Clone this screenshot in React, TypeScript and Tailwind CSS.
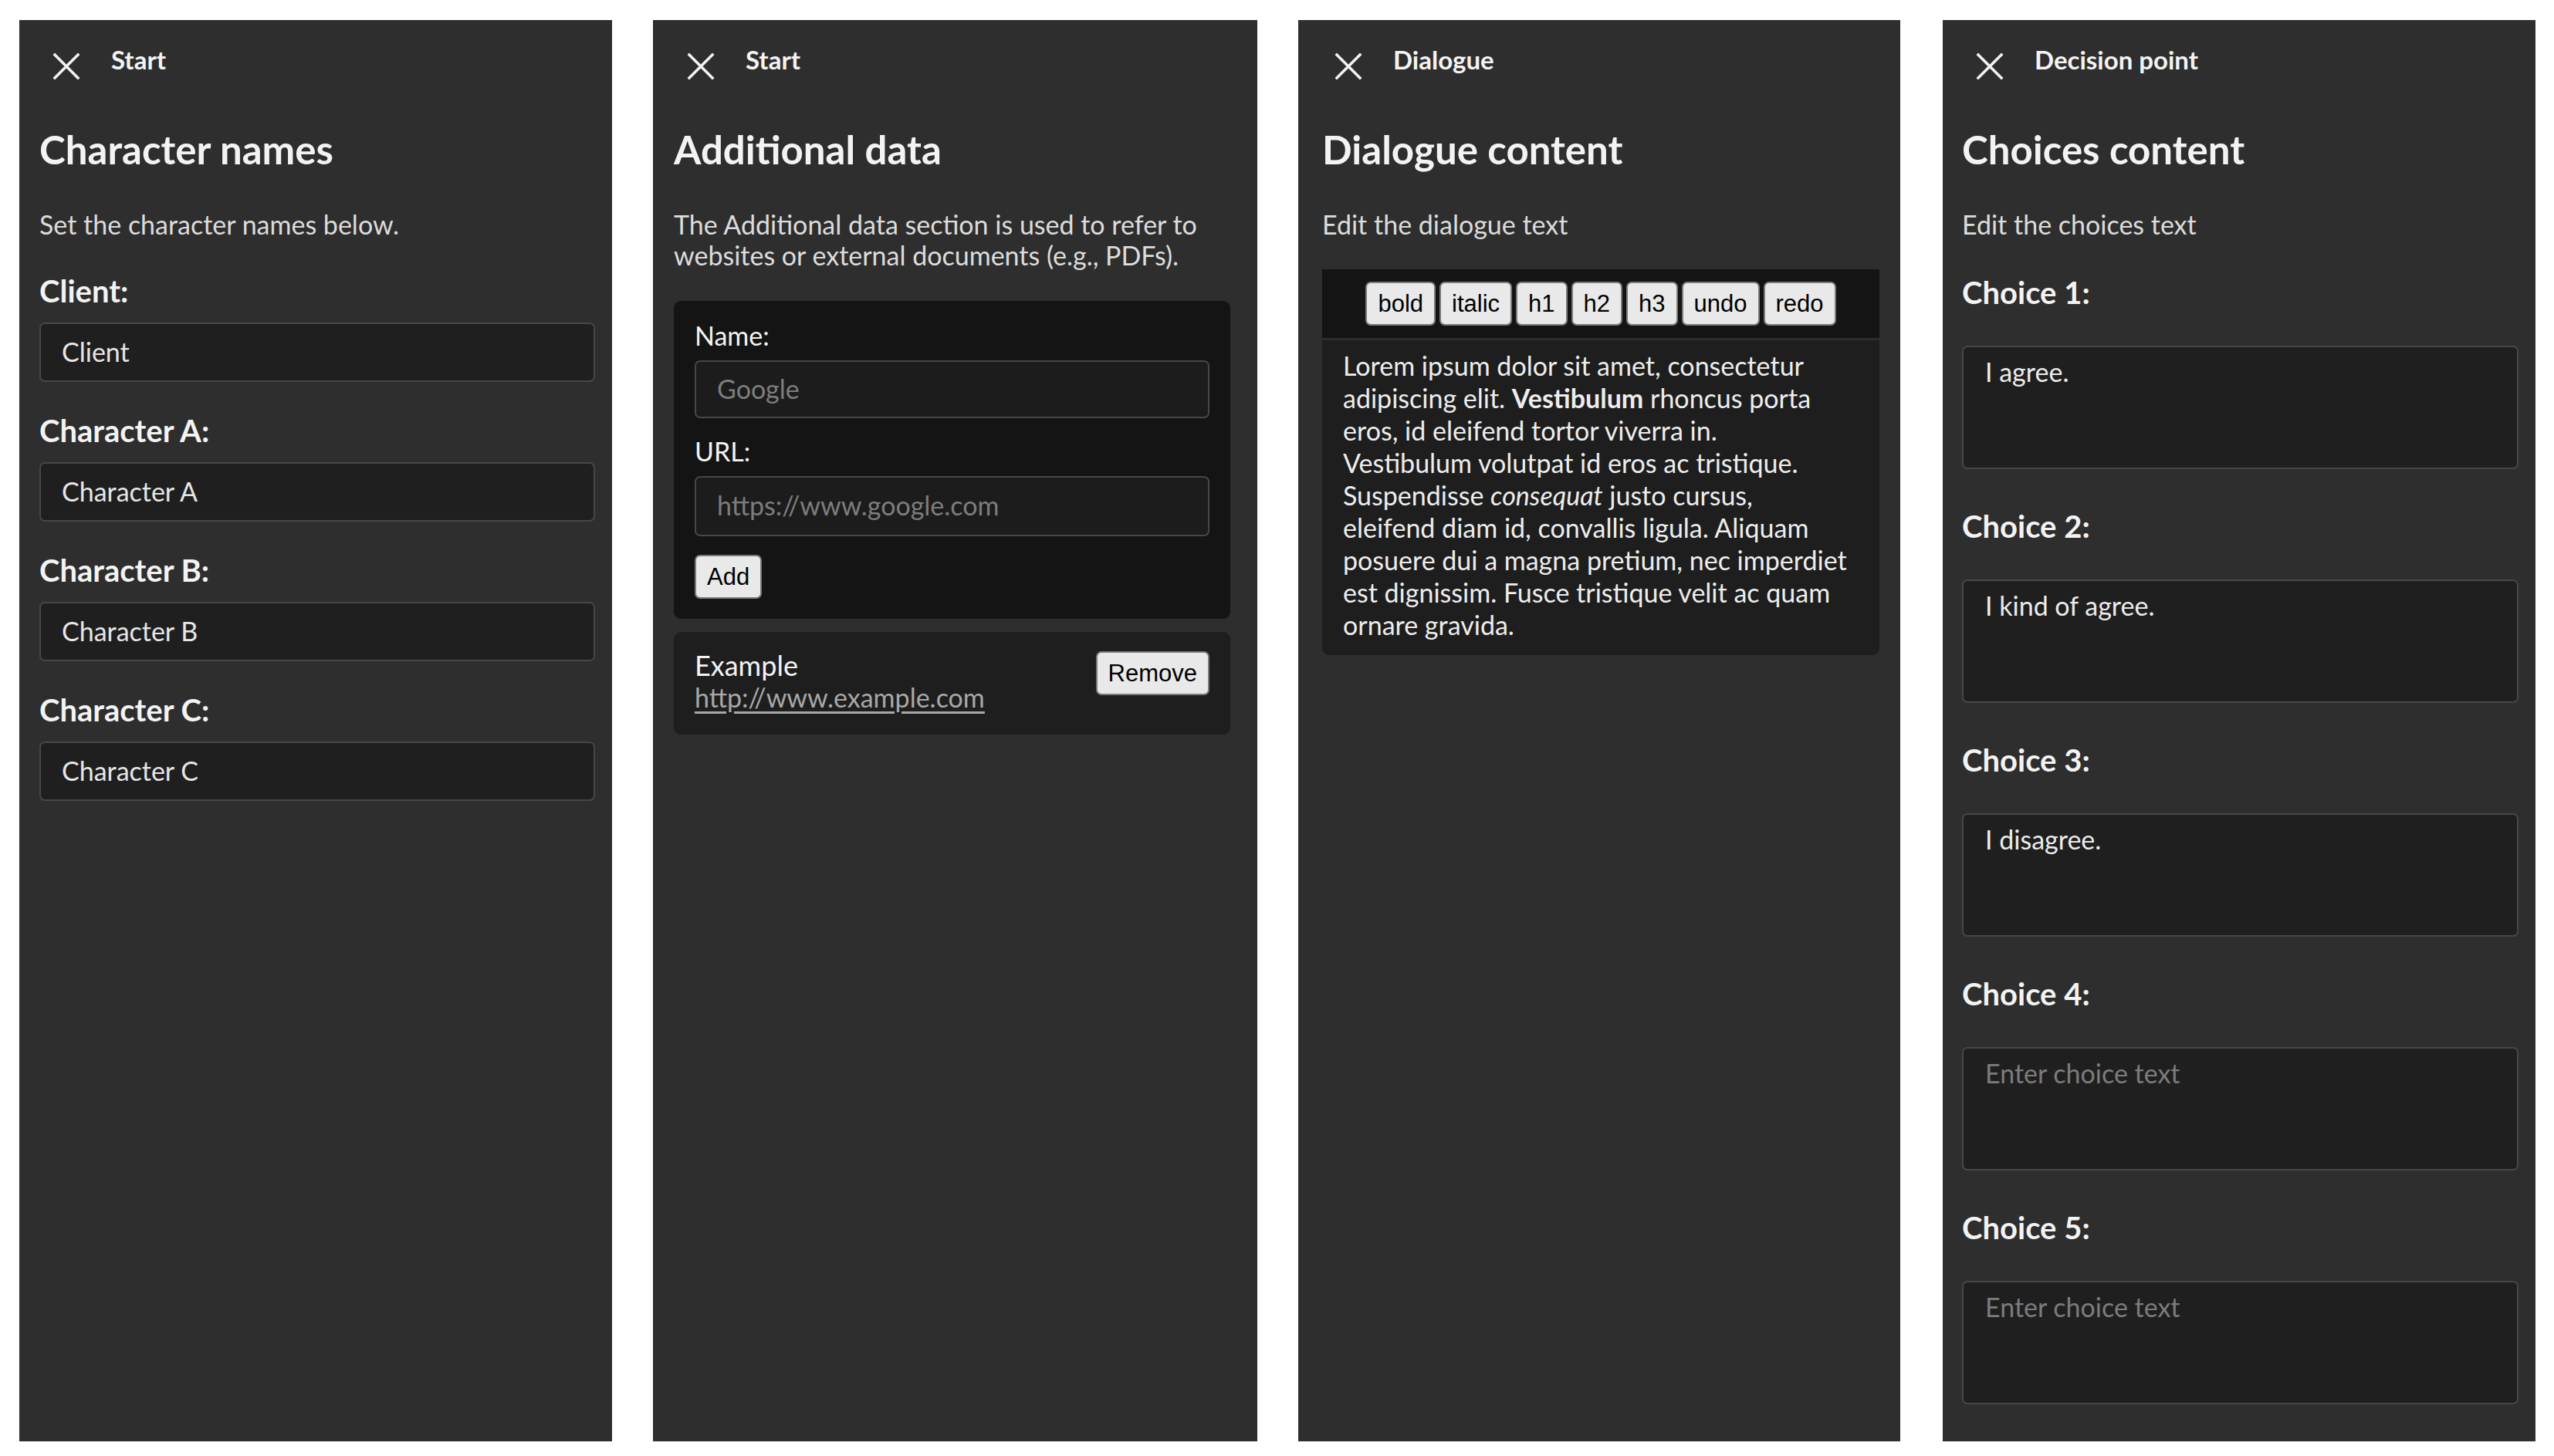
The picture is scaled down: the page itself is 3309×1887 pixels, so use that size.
import type { ReactNode } from 'react';

const CloseIcon = () => (
  <svg width="36" height="36" viewBox="0 0 36 36" className="mt-[11px] shrink-0">
    <path d="M3 3 L33 33 M33 3 L3 33" stroke="#f2f2f2" strokeWidth="3.6" strokeLinecap="square" fill="none" />
  </svg>
);

interface PanelProps {
  node: string;
  title: string;
  description: ReactNode;
  className: string;
  bodyClass: string;
  headClass?: string;
  children: ReactNode;
}

const Panel = ({ node, title, description, className, bodyClass, headClass = 'pl-[43px]', children }: PanelProps) => (
  <div className={`h-[1842px] shrink-0 bg-[#2e2e2e] text-[#f3f3f3] ${className}`}>
    <div className={`flex items-start pt-[31px] ${headClass}`}>
      <CloseIcon />
      <span className="ml-[40px] text-[33px] leading-[40px] font-bold">{node}</span>
    </div>
    <div className={bodyClass}>
      <h2 className="mt-[60px] text-[51px] leading-[60px] font-bold">{title}</h2>
      <p className="mt-[47px] text-[34px] leading-[40px] text-[#dcdcdc]">{description}</p>
      {children}
    </div>
  </div>
);

const btn =
  "h-[57px] px-[14px] rounded-[7px] border-2 border-[#7b7b7b] bg-[#e9e9e9] text-black text-[31px] leading-none font-['Liberation_Sans',Arial,sans-serif]";

const CharacterField = ({ label, value, first }: { label: string; value: string; first?: boolean }) => (
  <div className={first ? 'mt-[41px]' : 'mt-[38px]'}>
    <div className="text-[40px] leading-[50px] font-bold">{label}</div>
    <input
      defaultValue={value}
      className="mt-[16px] block w-full h-[77px] rounded-[7px] border-2 border-[#474747] bg-[#1f1f1f] pl-[27px] pb-[3px] text-[34px] text-[#e6e6e6] outline-none"
    />
  </div>
);

const ChoiceField = ({ n, value, first }: { n: number; value: string; first?: boolean }) => (
  <div className={first ? 'mt-[43px]' : 'mt-[49px]'}>
    <div className="text-[40px] leading-[50px] font-bold">Choice {n}:</div>
    <textarea
      defaultValue={value}
      placeholder="Enter choice text"
      className="mt-[44px] block w-full h-[160px] resize-none rounded-[7px] border-2 border-[#474747] bg-[#1f1f1f] pl-[28px] pt-[12px] text-[34px] leading-[40px] text-[#ececec] placeholder:text-[#7c7c7c] outline-none"
    />
  </div>
);

export default function App() {
  const tools = ['bold', 'italic', 'h1', 'h2', 'h3', 'undo', 'redo'];
  return (
    <div className="min-h-[1887px] w-[3309px] bg-white pt-[26px] pl-[25px] font-['Lato','Noto_Sans',sans-serif]">
      <div className="flex items-start">
        {/* Character names */}
        <Panel
          node="Start"
          title="Character names"
          description="Set the character names below."
          className="w-[768px]"
          bodyClass="pl-[26px] pr-[22px]"
        >
          <CharacterField first label="Client:" value="Client" />
          <CharacterField label="Character A:" value="Character A" />
          <CharacterField label="Character B:" value="Character B" />
          <CharacterField label="Character C:" value="Character C" />
        </Panel>

        {/* Additional data */}
        <Panel
          node="Start"
          title="Additional data"
          description="The Additional data section is used to refer to websites or external documents (e.g., PDFs)."
          className="ml-[53px] w-[783px]"
          bodyClass="pl-[27px] pr-[35px]"
          headClass="pl-[44px]"
        >
          <div className="mt-[39px] rounded-[9px] bg-[#141414] px-[27px] pt-[25px] pb-[26px]">
            <div className="text-[34px] leading-[40px]">Name:</div>
            <input
              placeholder="Google"
              className="mt-[12px] block w-full h-[75px] rounded-[7px] border-2 border-[#474747] bg-[#1c1c1c] pl-[27px] pb-[3px] text-[34px] text-[#e6e6e6] placeholder:text-[#7d7d7d] outline-none"
            />
            <div className="mt-[23px] text-[34px] leading-[40px]">URL:</div>
            <input
              placeholder="https://www.google.com"
              className="mt-[12px] block w-full h-[78px] rounded-[7px] border-2 border-[#474747] bg-[#1c1c1c] pl-[27px] pb-[3px] text-[34px] text-[#e6e6e6] placeholder:text-[#7d7d7d] outline-none"
            />
            <button className={`mt-[24px] ${btn}`}>Add</button>
          </div>
          <div className="mt-[17px] flex items-start justify-between rounded-[9px] bg-[#1e1e1e] px-[27px] pt-[22px] pb-[27px]">
            <div>
              <div className="text-[36px] leading-[42px]">Example</div>
              <a href="#" className="block text-[34px] leading-[42px] text-[#a8a8a8] underline underline-offset-[5px]">
                http://www.example.com
              </a>
            </div>
            <button className={`mt-[3px] ${btn}`}>Remove</button>
          </div>
        </Panel>

        {/* Dialogue */}
        <Panel
          node="Dialogue"
          title="Dialogue content"
          description="Edit the dialogue text"
          className="ml-[53px] w-[780px]"
          bodyClass="pl-[31px] pr-[27px]"
          headClass="pl-[47px]"
        >
          <div className="mt-[38px] flex h-[89px] items-center justify-center gap-[5px] bg-[#141414]">
            {tools.map(t => (
              <button key={t} className={btn}>{t}</button>
            ))}
          </div>
          <div className="mt-[3px] rounded-b-[9px] bg-[#1e1e1e] px-[27px] pt-[12px] pb-[18px] text-[34px] leading-[42px] text-[#ededed] whitespace-nowrap">
            Lorem ipsum dolor sit amet, consectetur<br />
            adipiscing elit. <b>Vestibulum</b> rhoncus porta<br />
            eros, id eleifend tortor viverra in.<br />
            Vestibulum volutpat id eros ac tristique.<br />
            Suspendisse <i>consequat</i> justo cursus,<br />
            eleifend diam id, convallis ligula. Aliquam<br />
            posuere dui a magna pretium, nec imperdiet<br />
            est dignissim. Fusce tristique velit ac quam<br />
            ornare gravida.
          </div>
        </Panel>

        {/* Decision point */}
        <Panel
          node="Decision point"
          title="Choices content"
          description="Edit the choices text"
          className="ml-[55px] w-[768px]"
          bodyClass="pl-[25px] pr-[22px]"
        >
          <ChoiceField first n={1} value="I agree." />
          <ChoiceField n={2} value="I kind of agree." />
          <ChoiceField n={3} value="I disagree." />
          <ChoiceField n={4} value="" />
          <ChoiceField n={5} value="" />
        </Panel>
      </div>
    </div>
  );
}
